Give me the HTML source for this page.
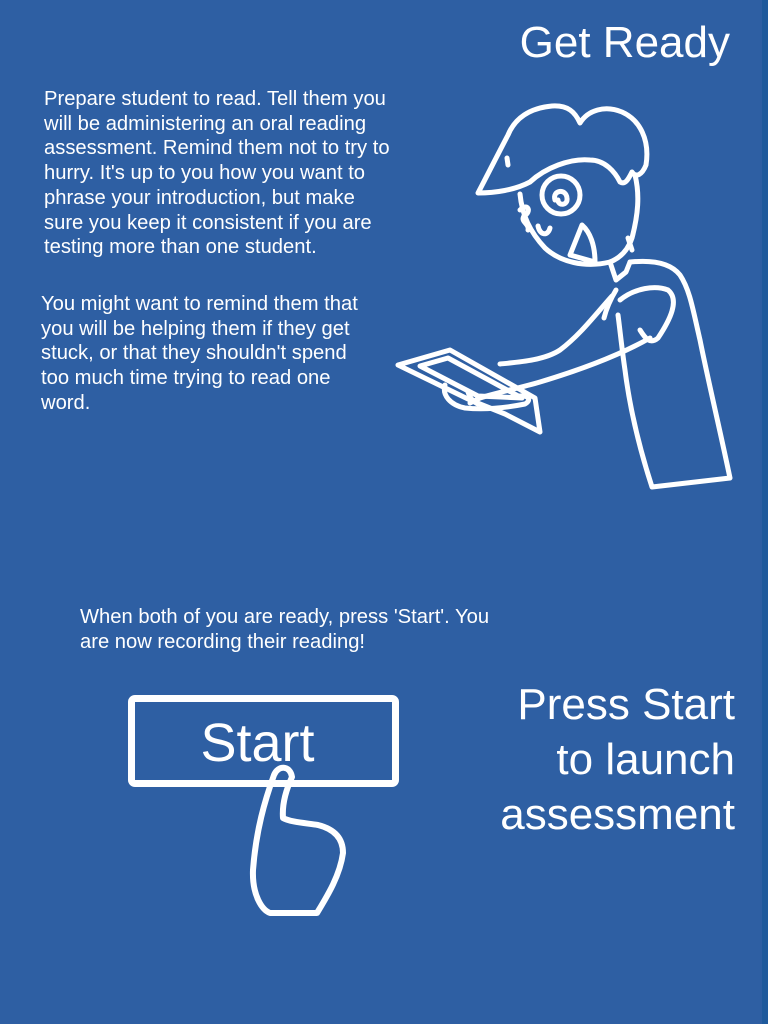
<!DOCTYPE html>
<html><head><meta charset="utf-8"><style>
html,body{margin:0;padding:0}
body{width:768px;height:1024px;background:#2e5fa3;position:relative;overflow:hidden;font-family:"Liberation Sans",Arial,sans-serif;color:#fff}
.strip{position:absolute;left:762px;top:0;width:6px;height:1024px;background:#1f5a9c}
.t{position:absolute;white-space:nowrap}
.p{font-size:20.2px;line-height:24.7px}
.big{font-size:44px;line-height:55px;text-align:right;right:33px;letter-spacing:0}
.box{position:absolute;left:128px;top:695px;width:257px;height:78px;border:7px solid #fff;border-radius:7px}
</style></head><body>
<div class="strip"></div>
<div class="t big" style="top:15px;right:38px;letter-spacing:0">Get Ready</div>
<div class="t p" style="left:44px;top:87px">Prepare student to read. Tell them you<br>will be administering an oral reading<br>assessment. Remind them not to try to<br>hurry. It's up to you how you want to<br>phrase your introduction, but make<br>sure you keep it consistent if you are<br>testing more than one student.</div>
<div class="t p" style="left:41px;top:292px">You might want to remind them that<br>you will be helping them if they get<br>stuck, or that they shouldn't spend<br>too much time trying to read one<br>word.</div>
<div class="t p" style="left:80px;top:605px">When both of you are ready, press 'Start'. You<br>are now recording their reading!</div>
<div class="t big" style="top:677px">Press Start<br>to launch<br>assessment</div>
<div class="box"></div>
<div class="t" style="left:122px;width:271px;top:710px;text-align:center;font-size:54px;line-height:66px">Start</div>
<svg width="768" height="1024" style="position:absolute;left:0;top:0" fill="none" stroke="#fff" stroke-width="5" stroke-linecap="round" stroke-linejoin="round">
<path d="M292 777 C290 765 278 765 274 775 C265 800 256 830 253 870 C252 895 262 910 270 913 L317 913 C328 895 340 875 343 853 C343 835 330 828 318 825 C305 823 290 822 283 818 C282 805 286 790 292 777 Z" stroke-width="6"/>
<path d="M478 193 C490 170 500 150 508 135 C515 118 530 108 552 106 C568 105 575 112 580 123 C588 110 605 105 622 112 C640 120 650 140 646 165 C642 175 636 178 632 172 C628 180 625 185 620 182 C615 172 605 160 590 160 C570 158 545 168 530 182 C515 190 495 193 478 193 Z"/>
<path d="M507 158 L508 165"/>
<path d="M520 194 C522 215 530 232 545 248 C560 262 585 268 610 262 C620 258 628 250 632 238 C638 215 640 195 635 175"/>
<path d="M520 210 C528 202 532 212 524 216 C520 222 530 224 528 230"/>
<path d="M538 226 C540 236 548 236 550 228"/>
<circle cx="561" cy="195" r="19"/>
<path d="M555 200 C552 190 566 188 567 198 C568 206 558 206 558 200"/>
<path d="M582 225 L570 255 L595 262 C595 245 590 232 582 225 Z"/>
<path d="M628 238 L632 250"/>
<path d="M610 262 L616 280 L626 272 L630 262"/>
<path d="M630 262 C650 260 670 262 680 275 C690 290 693 310 700 340 C708 380 720 430 730 478 L652 487 C640 450 630 410 625 370 C622 350 620 330 618 315"/>
<path d="M620 300 C635 288 655 285 668 290 C680 300 670 320 658 338 C650 345 645 338 640 330"/>
<path d="M616 290 C610 300 606 310 604 318"/>
<path d="M612 296 C595 315 580 335 560 350 C545 360 520 362 500 364"/>
<path d="M650 338 C620 355 580 370 540 382 C520 388 495 393 480 398 L470 403"/>
<path d="M398 365 L450 350 L535 398 L540 432 L505 414 L470 400 Z"/>
<path d="M420 366 L448 358 L522 398 L478 396 Z"/>
<path d="M445 385 C442 395 450 405 465 408 C485 410 505 408 525 404 C532 400 528 395 520 396"/>
<path d="M468 392 C470 398 473 402 478 404"/>
</svg>
</body></html>
